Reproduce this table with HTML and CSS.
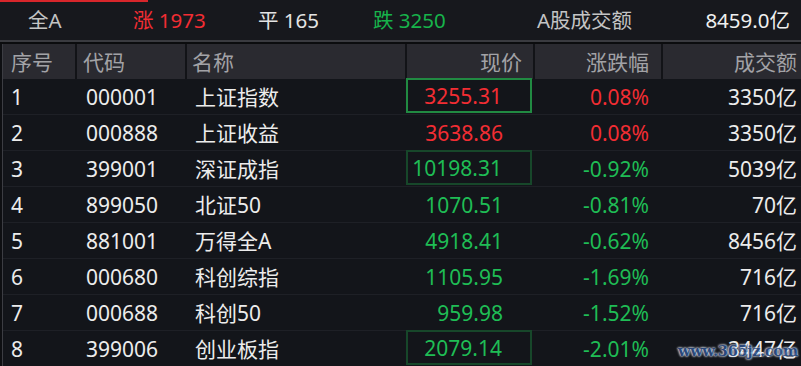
FILE: index.html
```html
<!DOCTYPE html>
<html lang="zh">
<head>
<meta charset="utf-8">
<link rel="stylesheet" href="styles.css">
</head>
<body>
<div class="screen">
  <div class="topbar">
    <div class="accent"></div>
    <span class="stat muted">全A</span>
    <span class="stat up">涨 1973</span>
    <span class="stat flat">平 165</span>
    <span class="stat down">跌 3250</span>
    <span class="stat muted">A股成交额</span>
    <span class="stat total">8459.0亿</span>
  </div>
  <div class="gap"></div>
  <div class="table">
    <div class="row head">
      <div class="c c1">序号</div>
      <div class="c c2">代码</div>
      <div class="c c3">名称</div>
      <div class="c c4">现价</div>
      <div class="c c5">涨跌幅</div>
      <div class="c c6">成交额</div>
    </div>
    <div class="row">
      <div class="c c1">1</div><div class="c c2">000001</div><div class="c c3">上证指数</div>
      <div class="c c4 up box-on">3255.31</div><div class="c c5 up">0.08%</div><div class="c c6">3350亿</div>
    </div>
    <div class="row">
      <div class="c c1">2</div><div class="c c2">000888</div><div class="c c3">上证收益</div>
      <div class="c c4 up">3638.86</div><div class="c c5 up">0.08%</div><div class="c c6">3350亿</div>
    </div>
    <div class="row">
      <div class="c c1">3</div><div class="c c2">399001</div><div class="c c3">深证成指</div>
      <div class="c c4 down box-dim">10198.31</div><div class="c c5 down">-0.92%</div><div class="c c6">5039亿</div>
    </div>
    <div class="row">
      <div class="c c1">4</div><div class="c c2">899050</div><div class="c c3">北证50</div>
      <div class="c c4 down">1070.51</div><div class="c c5 down">-0.81%</div><div class="c c6">70亿</div>
    </div>
    <div class="row">
      <div class="c c1">5</div><div class="c c2">881001</div><div class="c c3">万得全A</div>
      <div class="c c4 down">4918.41</div><div class="c c5 down">-0.62%</div><div class="c c6">8456亿</div>
    </div>
    <div class="row">
      <div class="c c1">6</div><div class="c c2">000680</div><div class="c c3">科创综指</div>
      <div class="c c4 down">1105.95</div><div class="c c5 down">-1.69%</div><div class="c c6">716亿</div>
    </div>
    <div class="row">
      <div class="c c1">7</div><div class="c c2">000688</div><div class="c c3">科创50</div>
      <div class="c c4 down">959.98</div><div class="c c5 down">-1.52%</div><div class="c c6">716亿</div>
    </div>
    <div class="row">
      <div class="c c1">8</div><div class="c c2">399006</div><div class="c c3">创业板指</div>
      <div class="c c4 down box-dim">2079.14</div><div class="c c5 down">-2.01%</div><div class="c c6">3447亿</div>
    </div>
  </div>
  <div class="watermark">www.365jz.com</div>
</div>
</body>
</html>
```

FILE: styles.css
```css
* { box-sizing: border-box; }
html, body {
  margin: 0;
  padding: 0;
  background: #0e0f12;
}
body {
  font-family: "Noto Sans", "Noto Sans CJK SC", sans-serif;
  font-size: 21px;
  color: #ececec;
  width: 801px;
  height: 366px;
  overflow: hidden;
}
.screen {
  position: relative;
  width: 801px;
  height: 366px;
  overflow: hidden;
}
.topbar {
  position: relative;
  height: 40px;
  background: #17181d;
  display: grid;
  grid-template-columns: 105px 125px 115px 164px 1fr auto;
  align-items: center;
  padding: 0 11px 0 28px;
  line-height: 24px;
  font-size: 20.5px;
}
.accent {
  position: absolute;
  left: 0;
  top: 0;
  width: 148px;
  height: 2px;
  background: #d8262b;
}
.stat { white-space: nowrap; }
.muted { color: #c4c4c4; }
.flat { color: #e4e4e4; }
.total { color: #f0f0f0; }
.up { color: #f22d33; }
.down { color: #1fbd55; }
.topbar .down { color: #17b34b; }
.gap {
  height: 4px;
  border-top: 2px solid #3a3b40;
  background: #0b0c0e;
}
.table {
  margin-left: 2px;
  border-left: 1px solid #3c3d43;
  background: #13151a;
}
.row {
  display: grid;
  grid-template-columns: 72px 110px 220px 128px 128px 140px;
  height: 36px;
  border-bottom: 1px solid #1e2026;
  line-height: 24px;
}
.row.head {
  height: 35px;
  background: #2a2a30;
  border-bottom: none;
  color: #a2a2a6;
}
.c {
  display: flex;
  align-items: center;
  white-space: nowrap;
}
.head .c + .c { border-left: 2px solid #121317; }
.c1 { padding-left: 8px; }
.c2 { padding-left: 11px; }
.c3 { padding-left: 10px; }
.head .c2 { padding-left: 6px; }
.head .c3 { padding-left: 5px; }
.c4 { justify-content: flex-end; padding-right: 30px; }
.head .c4 { padding-right: 11px; }
.c5 { justify-content: flex-end; padding-right: 12px; }
.c6 { justify-content: flex-end; padding-right: 4px; }
.box-on {
  border: 2px solid #218a42;
  margin: -1px 1px 1px 1px;
  padding-right: 28px;
}
.box-dim {
  border: 2px solid #17472a;
  margin: -1px 1px 1px 1px;
  padding-right: 28px;
}
.watermark {
  position: absolute;
  left: 678px;
  top: 342px;
  font-family: "DejaVu Serif", serif;
  font-weight: bold;
  font-size: 14.5px;
  letter-spacing: -0.3px;
  color: #2d4f86;
  text-shadow: 0 0 2px #e8eef8, 0 0 2px #e8eef8, 0 0 3px #c8d4ea;
  opacity: 0.9;
}
```
